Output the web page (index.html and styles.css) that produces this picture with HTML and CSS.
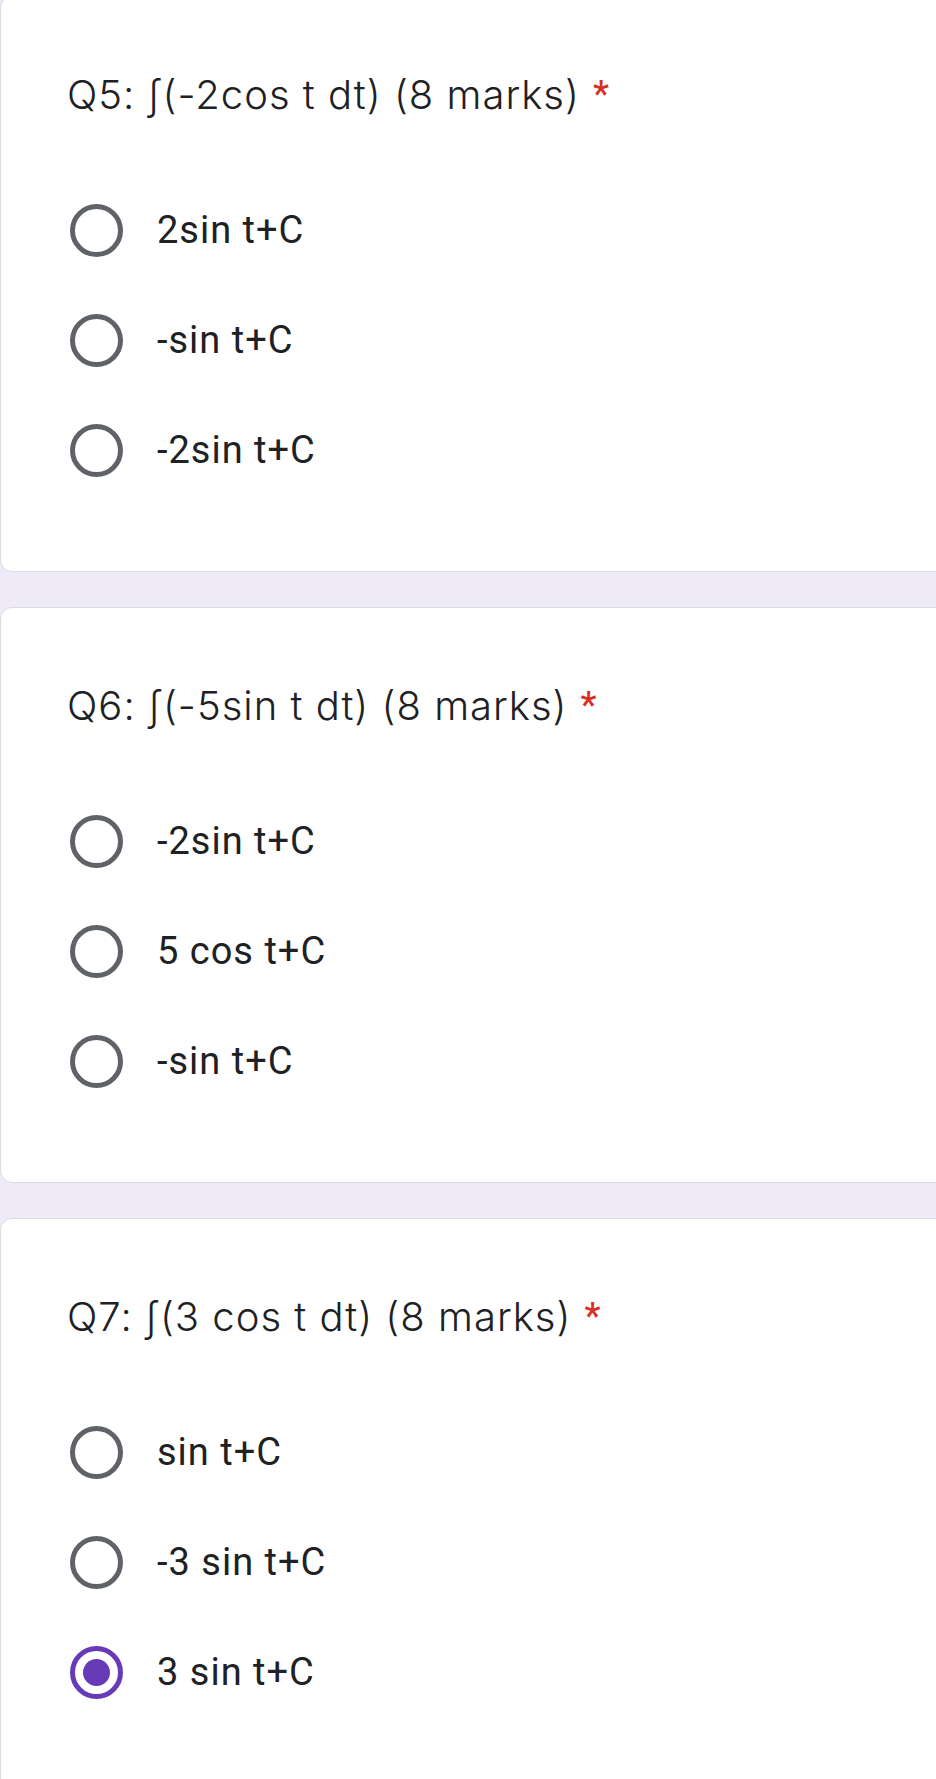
FILE: index.html
```html
<!DOCTYPE html>
<html>
<head>
<meta charset="utf-8">
<link rel="stylesheet" href="styles.css">
</head>
<body>
<main class="form">
  <section class="card first">
    <h2 class="title">Q5: ∫(-2cos t dt) (8 marks)<span class="req">*</span></h2>
    <div class="options">
      <label class="option"><span class="radio"></span><span class="text">2sin t+C</span></label>
      <label class="option"><span class="radio"></span><span class="text">-sin t+C</span></label>
      <label class="option"><span class="radio"></span><span class="text">-2sin t+C</span></label>
    </div>
  </section>
  <section class="card">
    <h2 class="title">Q6: ∫(-5sin t dt) (8 marks)<span class="req">*</span></h2>
    <div class="options">
      <label class="option"><span class="radio"></span><span class="text">-2sin t+C</span></label>
      <label class="option"><span class="radio"></span><span class="text">5 cos t+C</span></label>
      <label class="option"><span class="radio"></span><span class="text">-sin t+C</span></label>
    </div>
  </section>
  <section class="card">
    <h2 class="title">Q7: ∫(3 cos t dt) (8 marks)<span class="req">*</span></h2>
    <div class="options">
      <label class="option"><span class="radio"></span><span class="text">sin t+C</span></label>
      <label class="option"><span class="radio"></span><span class="text">-3 sin t+C</span></label>
      <label class="option"><span class="radio checked"></span><span class="text">3 sin t+C</span></label>
    </div>
  </section>
</main>
</body>
</html>
```
FILE: styles.css
```css
html, body {
  margin: 0;
  padding: 0;
  background: #eeeaf8;
  overflow: hidden;
}
body {
  width: 936px;
  height: 1779px;
}
.form {
  display: flex;
  flex-direction: column;
  gap: 35px;
}
.card {
  box-sizing: border-box;
  width: 960px;
  height: 576px;
  background: #ffffff;
  border: 1px solid #dadce0;
  border-radius: 12px;
  padding: 73px 0 0 66px;
}
.card.first {
  margin-top: -4px;
}
.title {
  margin: 0;
  font-family: Inter, "DejaVu Sans", sans-serif;
  font-weight: 350;
  font-size: 40px;
  line-height: 48px;
  color: #202124;
  letter-spacing: 1px;
}
.req {
  font-family: Roboto, sans-serif;
  font-weight: 500;
  color: #d93025;
  font-size: 36px;
  margin-left: 13px;
  vertical-align: 3px;
}
.options {
  margin-top: 56px;
  display: flex;
  flex-direction: column;
}
.option {
  height: 110px;
  display: flex;
  align-items: center;
  gap: 34px;
  padding-left: 3px;
}
.radio {
  box-sizing: border-box;
  width: 53px;
  height: 53px;
  border: 5px solid #5f6368;
  border-radius: 50%;
  display: flex;
  align-items: center;
  justify-content: center;
  flex: none;
}
.radio.checked {
  border-color: #673ab7;
}
.radio.checked::after {
  content: "";
  width: 27px;
  height: 27px;
  border-radius: 50%;
  background: #673ab7;
}
.text {
  font-family: Roboto, sans-serif;
  font-size: 38px;
  color: #202124;
  letter-spacing: 1px;
}
```
